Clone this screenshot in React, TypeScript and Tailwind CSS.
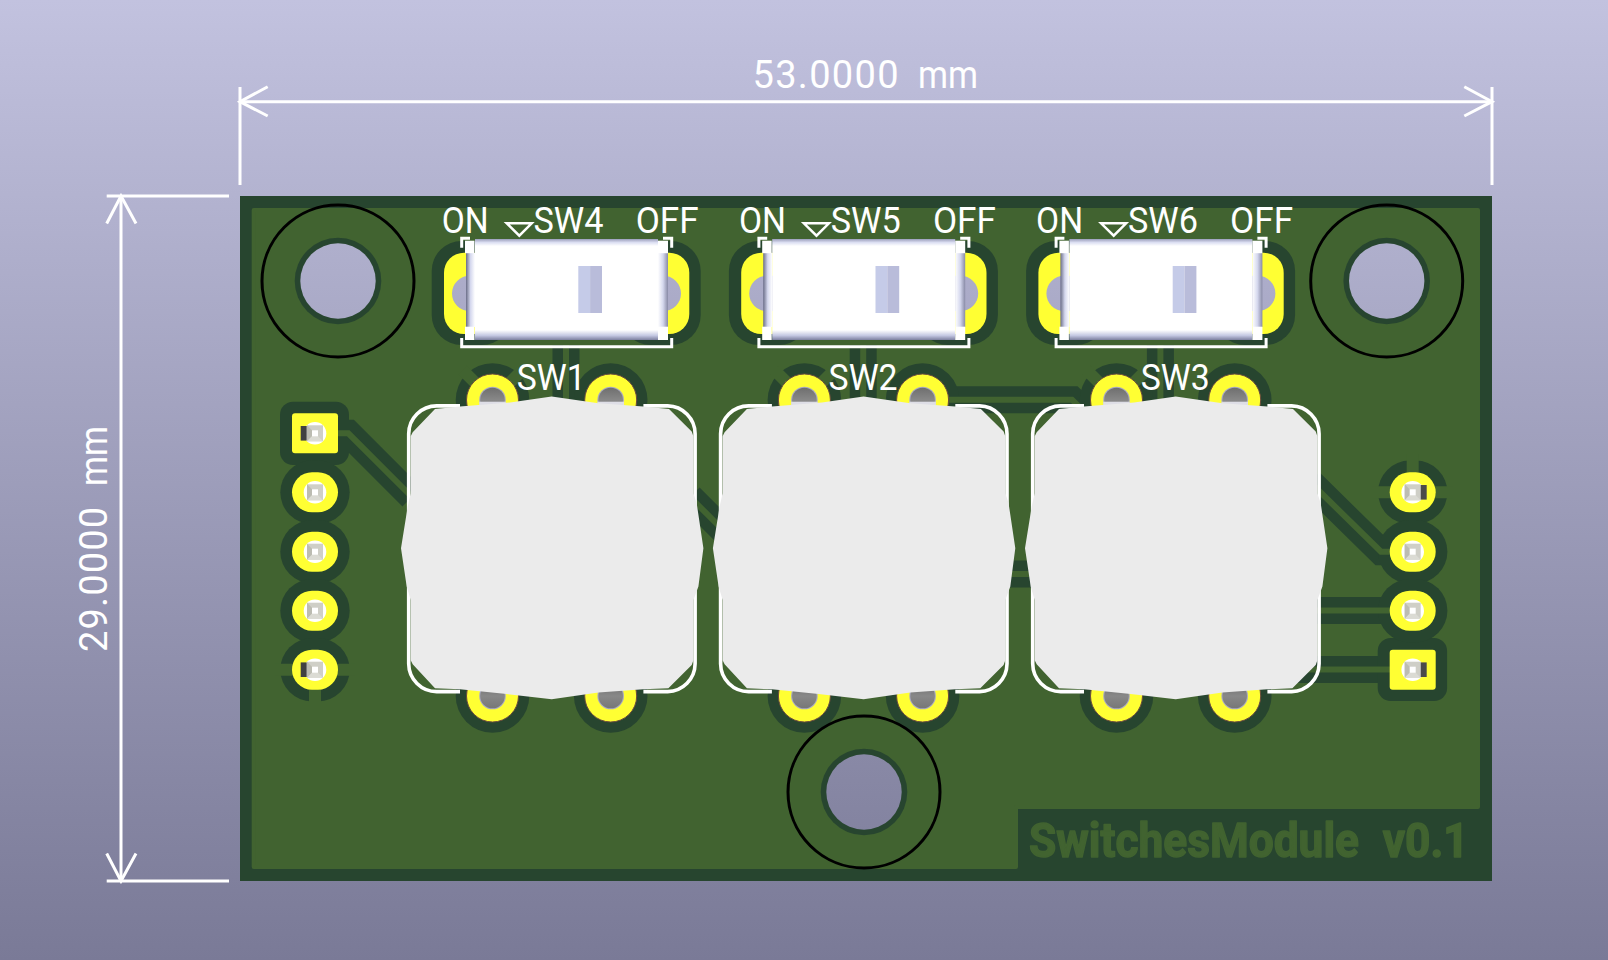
const HOLES = [
  [338, 281],
  [1386.7, 281],
  [864, 792],
];

// step between switches in each row
const SLIDE_X = [0, 297.2, 594.4];
const KEY_X = [551.7, 863.6, 1175.7];
const HEADER_Y = [433.3, 492.3, 551.7, 610.7, 669.7];

const KEY_POINTS =
  "0,-151.7 -41.7,-145.7 -91.7,-141.7 -116.7,-139.3 -139,-116 -141,-112 -141,-55 -144,-41.7 -150.7,0 -145,38.3 -141,51.7 -141,112 -139,116 -116.7,140 -91.7,141 -45,145.7 0,151 46.7,144.3 91.7,141 116.7,140 140,116.7 141.7,112 141.7,51.7 146.7,38.3 151.7,0 145,-45 141.7,-55 141.7,-112 140,-116.7 117.3,-139.3 91.7,-141.7 46.7,-145";

const TRACES = [
  "M338 433.3 H348.3 L412 497",
  "M690 497 L730 537",
  "M923 399.7 H1072 L1110 437",
  "M1000 574 H1040",
  "M1310 482 L1381 551.7 H1412",
  "M1290 610.5 H1412",
  "M1290 669.5 H1412",
  "M566 345 V405",
  "M863.2 345 V405",
  "M1160.4 345 V405",
];

const DARK = "#27452f";
const LIGHT = "#416330";
const YELLOW = "#ffff33";

function HeaderPad({ x, y, square, dark }: { x: number; y: number; square?: boolean; dark?: "left" | "right" }) {
  return (
    <g>
      {square ? (
        <rect x={x - 23} y={y - 20} width={46} height={40} rx={3} fill={YELLOW} />
      ) : (
        <rect x={x - 23} y={y - 20} width={46} height={40} rx={20} fill={YELLOW} />
      )}
      <circle cx={x} cy={y} r={11.3} fill="#ffffff" />
      <rect x={x - 8} y={y - 8} width={16} height={16} fill="#cfcfc7" />
      <polygon points={`${x - 8},${y - 8} ${x},${y} ${x - 8},${y + 8}`} fill="#bcbcb2" />
      <polygon points={`${x - 8},${y + 8} ${x},${y} ${x + 8},${y + 8}`} fill="#dbdbd4" />
      <rect x={x - 3} y={y - 3} width={6} height={6} fill="#ffffff" />
      {dark === "left" && <rect x={x - 14.3} y={y - 7.3} width={6} height={14.6} fill="#414141" />}
      {dark === "right" && <rect x={x + 8} y={y - 7.3} width={6} height={14.6} fill="#4a4a4a" />}
    </g>
  );
}

function SlideBody({ dx }: { dx: number }) {
  return (
    <g transform={`translate(${dx} 0)`}>
      <rect x={475} y={246} width={183} height={84} fill="#ffffff" />
      <rect x={466} y={253} width={9} height={74} fill="url(#bandLeft)" />
      <rect x={658} y={253} width={10} height={74} fill="url(#bandRight)" />
      <rect x={475} y={239} width={183} height={7} fill="url(#bandTop)" />
      <rect x={475} y={330} width={183} height={10} fill="url(#bandBottom)" />
      <rect x={465} y={240.7} width={9.5} height={12.5} fill="#ffffff" />
      <rect x={658} y={240.7} width={10} height={12.5} fill="#ffffff" />
      <rect x={465} y={326.7} width={9.5} height={13.3} fill="#ffffff" />
      <rect x={658} y={326.7} width={10} height={13.3} fill="#ffffff" />
      <rect x={578.3} y={266} width={11.8} height={47} fill="#c5cbe8" />
      <rect x={590.1} y={266} width={11.9} height={47} fill="#b9bcda" />
      <path
        d="M461.7 247.7 V238.3 H470 M663 238.3 H671.7 V247.7 M461.7 338 V346.7 H671.7 V338"
        fill="none"
        stroke="#ffffff"
        strokeWidth={3}
      />
      <polygon points="506.7,223.3 531.7,223.3 519.3,235.7" fill="none" stroke="#ffffff" strokeWidth={2.5} />
      <text x={441.7} y={232.7} textLength={47} lengthAdjust="spacingAndGlyphs" className="fill-white text-[36px] font-['Roboto',sans-serif]">
        ON
      </text>
      <text x={533.5} y={232.7} textLength={70} lengthAdjust="spacingAndGlyphs" className="fill-white text-[36px] font-['Roboto',sans-serif]">
        {dx === 0 ? "SW4" : dx < 300 ? "SW5" : "SW6"}
      </text>
      <text x={635.7} y={232.7} textLength={63} lengthAdjust="spacingAndGlyphs" className="fill-white text-[36px] font-['Roboto',sans-serif]">
        OFF
      </text>
    </g>
  );
}

function Key({ cx, label }: { cx: number; label: string }) {
  return (
    <g transform={`translate(${cx} 548.3)`}>
      {[-59.2, 59].flatMap((px) =>
        [-148.3, 147.7].map((py) => (
          <g key={`${px}${py}`}>
            <rect x={px - 13.3} y={py - 13.3} width={26.6} height={26.6} rx={13.3} fill="#a9a9c4" />
            <rect x={px - 12.3} y={py - 12.3} width={24.6} height={24.6} rx={12.3} fill="url(#legShade)" />
          </g>
        ))
      )}
      <rect x={-72.5} y={-146.6} width={26.6} height={6} fill="#dedee6" />
      <rect x={45.7} y={-146.6} width={26.6} height={6} fill="#dedee6" />
      <path
        d="M-91.7 -142.4 H-115 A28 28 0 0 0 -143 -114.6 V115.5 A28 28 0 0 0 -115 143.3 H-91.7 M91.7 143.3 H116 A28 28 0 0 0 143.4 115.5 V-114.6 A28 28 0 0 0 116 -142.4 H91.7"
        fill="none"
        stroke="#ffffff"
        strokeWidth={3.6}
      />
      <polygon points={KEY_POINTS} fill="#ebebeb" />
      <text x={-35} y={-158.3} textLength={69} lengthAdjust="spacingAndGlyphs" className="fill-white text-[36px] font-['Roboto',sans-serif]">
        {label}
      </text>
    </g>
  );
}

export default function App() {
  return (
    <div className="h-[960px] w-full overflow-hidden bg-linear-to-b from-[#c2c2df] to-[#7a7a97]">
      <svg viewBox="0 0 1608 960" width={1608} height={960}>
        <defs>
          <mask id="drills" maskUnits="userSpaceOnUse" x={0} y={0} width={1608} height={960}>
            <rect width={1608} height={960} fill="#ffffff" />
            {HOLES.map(([x, y]) => (
              <circle key={x} cx={x} cy={y} r={37.7} fill="#000000" />
            ))}
            {SLIDE_X.map((dx) => (
              <g key={dx}>
                <rect x={452 + dx} y={275.7} width={40} height={35.4} rx={17.7} fill="#000000" />
                <rect x={641 + dx} y={275.7} width={40} height={35.4} rx={17.7} fill="#000000" />
              </g>
            ))}
          </mask>
          <linearGradient id="bandLeft" x1="0" x2="1" y1="0" y2="0">
            <stop offset="0" stopColor="#6a6d88" />
            <stop offset="0.5" stopColor="#d5d8ee" />
            <stop offset="1" stopColor="#ffffff" />
          </linearGradient>
          <linearGradient id="bandRight" x1="0" x2="1" y1="0" y2="0">
            <stop offset="0" stopColor="#ffffff" />
            <stop offset="0.5" stopColor="#d5d8ee" />
            <stop offset="1" stopColor="#888aa6" />
          </linearGradient>
          <linearGradient id="bandTop" x1="0" x2="0" y1="0" y2="1">
            <stop offset="0" stopColor="#9a9dbb" />
            <stop offset="0.5" stopColor="#dcdff2" />
            <stop offset="1" stopColor="#ffffff" />
          </linearGradient>
          <linearGradient id="bandBottom" x1="0" x2="0" y1="0" y2="1">
            <stop offset="0" stopColor="#ffffff" />
            <stop offset="0.55" stopColor="#c4c8e2" />
            <stop offset="1" stopColor="#7d80a0" />
          </linearGradient>
          <linearGradient id="legShade" x1="0" x2="0" y1="0" y2="1">
            <stop offset="0" stopColor="#6f6f6f" />
            <stop offset="0.5" stopColor="#888888" />
            <stop offset="1" stopColor="#777777" />
          </linearGradient>
        </defs>

        {/* Dimensions */}
        <g stroke="#ffffff" strokeWidth={3} fill="none">
          <path d="M240 87 V185 M1492 87 V185 M240 101.7 H1492" />
          <path d="M267.7 86.7 L240 101.7 L267.7 116 M1464.3 86.7 L1492 101.7 L1464.3 116" />
          <path d="M106.7 196 H229 M106.7 881 H229 M121 196 V881" />
          <path d="M106.7 223.5 L121 196 L136 223.5 M106.7 853.5 L121 881 L136 853.5" />
        </g>
        <text x={752.5} y={88} textLength={146} className="fill-white text-[38px] font-['Roboto',sans-serif]">
          53.0000
        </text>
        <text x={918} y={88} textLength={60} lengthAdjust="spacingAndGlyphs" className="fill-white text-[38px] font-['Roboto',sans-serif]">
          mm
        </text>
        <text transform="translate(107 652) rotate(-90)" textLength={145} className="fill-white text-[38px] font-['Roboto',sans-serif]">
          29.0000
        </text>
        <text transform="translate(107 486) rotate(-90)" textLength={60} lengthAdjust="spacingAndGlyphs" className="fill-white text-[38px] font-['Roboto',sans-serif]">
          mm
        </text>

        {/* Board */}
        <g mask="url(#drills)">
          <rect x={240} y={196} width={1252} height={685} fill={DARK} />
          <path
            d="M253.7 210 H1478 V807 H1016 V867 H253.7 Z"
            fill={LIGHT}
            stroke={LIGHT}
            strokeWidth={4}
            strokeLinejoin="round"
          />

          {/* clearance */}
          {HOLES.map(([x, y]) => (
            <circle key={x} cx={x} cy={y} r={43.3} fill={DARK} />
          ))}
          {TRACES.map((d) => (
            <path key={d} d={d} fill="none" stroke={DARK} strokeWidth={27} />
          ))}
          {SLIDE_X.map((dx) => (
            <g key={dx} fill={DARK}>
              <rect x={431.7 + dx} y={241} width={80} height={104} rx={30} />
              <rect x={620.7 + dx} y={241} width={80} height={104} rx={30} />
            </g>
          ))}
          {KEY_X.flatMap((cx) =>
            [-59.2, 59].flatMap((px) =>
              [400, 696].map((py) => <circle key={`${cx}${px}${py}`} cx={cx + px} cy={py} r={36.8} fill={DARK} />)
            )
          )}
          <rect x={280} y={401.7} width={69} height={63.4} rx={13} fill={DARK} />
          <rect x={1377.7} y={638} width={69.4} height={63} rx={13} fill={DARK} />
          {HEADER_Y.slice(1).map((y) => (
            <rect key={y} x={280.3} y={y - 31.7} width={69.4} height={63.4} rx={31.7} fill={DARK} />
          ))}
          {HEADER_Y.slice(1, 4).map((y) => (
            <rect key={y} x={1378} y={y - 31.7} width={69.4} height={63.4} rx={31.7} fill={DARK} />
          ))}

          {/* copper and thermal spokes */}
          <g stroke={LIGHT} fill="none">
            {TRACES.map((d) => (
              <path key={d} d={d} strokeWidth={6} />
            ))}
            <g strokeWidth={12}>
              <path d="M275 669.7 H355 M315 669.7 V708" />
              <path d="M1372 492.3 H1453 M1412.7 492.3 V454" />
              {KEY_X.map((cx) => (
                <path key={cx} d={`M${cx - 59.2} 400 L${cx - 59.2 - 30} 370 M${cx - 59.2} 400 L${cx - 59.2 + 30} 370`} />
              ))}
            </g>
          </g>

          {/* pads */}
          {SLIDE_X.map((dx) => (
            <g key={dx} fill={YELLOW}>
              <rect x={444 + dx} y={252.7} width={50} height={81.3} rx={20} />
              <rect x={639.3 + dx} y={252.7} width={50} height={81.3} rx={20} />
            </g>
          ))}
          {KEY_X.flatMap((cx) =>
            [-59.2, 59].flatMap((px) =>
              [400, 696].map((py) => (
                <circle key={`${cx}${px}${py}`} cx={cx + px} cy={py} r={26} fill={YELLOW} stroke="#6b4b3d" strokeWidth={1} />
              ))
            )
          )}
          <text
            x={1029}
            y={856.7}
            textLength={330}
            lengthAdjust="spacingAndGlyphs"
            className="text-[48px] font-bold font-['Roboto',sans-serif]"
            fill={LIGHT}
            stroke={LIGHT}
            strokeWidth={1.5}
            strokeLinejoin="round"
          >
            SwitchesModule
          </text>
          <text
            x={1382.7}
            y={856.7}
            textLength={86}
            lengthAdjust="spacingAndGlyphs"
            className="text-[48px] font-bold font-['Roboto',sans-serif]"
            fill={LIGHT}
            stroke={LIGHT}
            strokeWidth={1.5}
            strokeLinejoin="round"
          >
            v0.1
          </text>
        </g>

        {/* Mounting hole outlines */}
        {HOLES.map(([x, y]) => (
          <circle key={x} cx={x} cy={y} r={76} fill="none" stroke="#000000" strokeWidth={3} />
        ))}

        {/* Pin headers */}
        {HEADER_Y.map((y, i) => (
          <HeaderPad key={y} x={315} y={y} square={i === 0} dark={i === 0 || i === 4 ? "left" : undefined} />
        ))}
        {HEADER_Y.slice(1).map((y, i) => (
          <HeaderPad key={y} x={1412.7} y={y} square={i === 3} dark={i === 0 || i === 3 ? "right" : undefined} />
        ))}

        {SLIDE_X.map((dx) => (
          <SlideBody key={dx} dx={dx} />
        ))}
        <Key cx={KEY_X[0]} label="SW1" />
        <Key cx={KEY_X[1]} label="SW2" />
        <Key cx={KEY_X[2]} label="SW3" />
      </svg>
    </div>
  );
}
